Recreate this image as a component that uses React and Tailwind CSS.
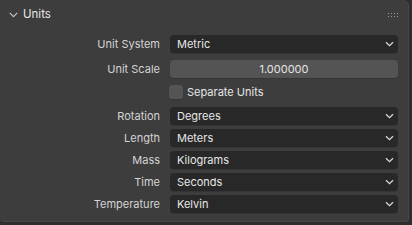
import React from "react";

const Chevron = () => (
  <svg width="9" height="6" viewBox="0 0 9 6" className="shrink-0">
    <path d="M1 1.2 L4.5 4.6 L8 1.2" fill="none" stroke="#d8d8d8" strokeWidth="1.3" />
  </svg>
);

const Dropdown = ({ value }) => (
  <div className="flex-1 h-[18px] rounded-[4px] bg-[#282828] shadow-[0_1px_0_#353535] flex items-center justify-between pl-[7px] pr-[4px] text-[#e6e6e6]">
    <span>{value}</span>
    <Chevron />
  </div>
);

const Row = ({ label, children, mt = "mt-[4px]" }) => (
  <div className={`flex items-center h-[18px] ${mt}`}>
    <div className="w-[170px] text-right pr-[10px] text-[#d4d4d4]">{label}</div>
    {children}
  </div>
);

export default function App() {
  return (
    <div
      className="w-[412px] h-[225px] bg-[#2e2e2e] overflow-hidden text-[11px] leading-none"
      style={{ fontFamily: "Inter, 'Noto Sans', sans-serif" }}
    >
      <div className="w-[409px] h-[222px] bg-[#3d3d3d] rounded-tr-[6px] rounded-b-[4px] border-r border-b border-[#474747] flex flex-col">
        <div className="h-[28px] flex items-center pl-[9px] pr-[9px] pt-[1px]">
          <svg width="9" height="6" viewBox="0 0 9 6" className="mr-[5px]">
            <path d="M0.8 0.8 L4.5 4.6 L8.2 0.8" fill="none" stroke="#c8c8c8" strokeWidth="1.1" />
          </svg>
          <span className="text-[#e8e8e8] text-[11.5px]">Units</span>
          <div className="ml-auto grid grid-cols-4 gap-x-[2px] gap-y-[2px] mr-[1px]">
            {Array.from({ length: 8 }).map((_, i) => (
              <div key={i} className="w-[1px] h-[1px] bg-[#9a9a9a]" />
            ))}
          </div>
        </div>
        <div className="pr-[10px] flex flex-col mt-[7px]">
          <Row label="Unit System" mt="mt-0">
            <Dropdown value="Metric" />
          </Row>
          <Row label="Unit Scale" mt="mt-[7px]">
            <div className="flex-1 h-[18px] rounded-[4px] bg-[#545454] shadow-[0_1px_0_#353535] flex items-center justify-center text-[#e6e6e6]">
              1.000000
            </div>
          </Row>
          <div className="flex items-center h-[14px] mt-[7px]">
            <div className="w-[169px]" />
            <div className="w-[14px] h-[14px] rounded-[3px] bg-[#545454] shadow-[0_1px_0_#353535]" />
            <span className="ml-[4px] text-[#e6e6e6]">Separate Units</span>
          </div>
          <Row label="Rotation" mt="mt-[8px]">
            <Dropdown value="Degrees" />
          </Row>
          <Row label="Length">
            <Dropdown value="Meters" />
          </Row>
          <Row label="Mass">
            <Dropdown value="Kilograms" />
          </Row>
          <Row label="Time">
            <Dropdown value="Seconds" />
          </Row>
          <Row label="Temperature">
            <Dropdown value="Kelvin" />
          </Row>
        </div>
      </div>
    </div>
  );
}
